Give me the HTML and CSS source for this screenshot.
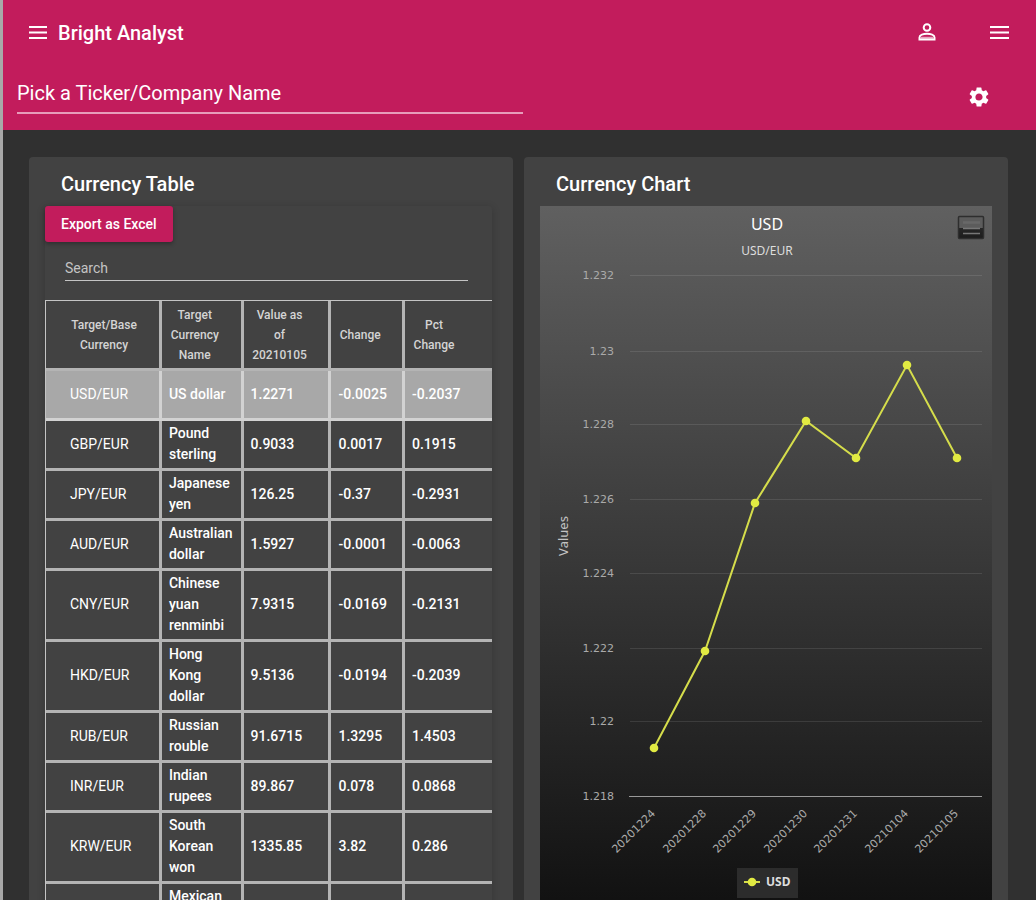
FILE: index.html
```html
<!DOCTYPE html>
<html lang="en">
<head>
<meta charset="utf-8">
<title>Bright Analyst</title>
<link rel="stylesheet" href="styles.css">
</head>
<body>
<div class="app">
  <header class="header">
    <div class="topbar">
      <button class="icon-button" type="button" aria-label="Menu">
        <svg width="20" height="20" viewBox="0 0 20 20"><path d="M1 4h18M1 9.500h18M1 15h18" stroke="currentColor" stroke-width="2"/></svg>
      </button>
      <h1 class="brand">Bright Analyst</h1>
      <nav class="actions">
        <button class="icon-button" type="button" aria-label="Account">
          <svg width="20" height="20" viewBox="0 0 20 20" fill="none" stroke="currentColor" stroke-width="2"><circle cx="10" cy="4.500" r="3.300"/><path d="M2.500 16.500v-2C2.500 12 6.500 10.800 10 10.800s7.500 1.200 7.500 3.700v2z"/><path d="M4 14.800h12" opacity=".6"/></svg>
        </button>
        <button class="icon-button" type="button" aria-label="More">
          <svg width="20" height="20" viewBox="0 0 20 20"><path d="M1 4h19M1 9.500h19M1 15h19" stroke="currentColor" stroke-width="2"/></svg>
        </button>
      </nav>
    </div>
    <div class="picker">
      <input class="ticker" type="text" aria-label="Pick a Ticker/Company Name" placeholder="Pick a Ticker/Company Name">
      <button class="icon-button settings" type="button" aria-label="Settings">
        <svg width="24" height="24" viewBox="0 0 24 24" fill="currentColor"><path d="M19.140 12.940c.04-.3.060-.61.060-.94s-.02-.64-.07-.94l2.030-1.580a.49.49 0 0 0 .12-.61l-1.920-3.320a.488.488 0 0 0-.59-.22l-2.390.96c-.5-.38-1.030-.7-1.620-.94l-.36-2.540a.484.484 0 0 0-.48-.41h-3.840c-.24 0-.43.17-.47.41l-.36 2.540c-.59.24-1.130.57-1.620.94l-2.390-.96c-.22-.08-.47 0-.59.22L2.740 8.870c-.12.21-.08.47.12.61l2.030 1.580c-.05.3-.09.63-.09.94s.02.64.07.94l-2.030 1.580a.49.49 0 0 0-.12.61l1.920 3.320c.12.22.37.29.59.22l2.390-.96c.5.38 1.030.7 1.620.94l.36 2.540c.05.24.24.41.48.41h3.840c.24 0 .44-.17.47-.41l.36-2.540c.59-.24 1.130-.56 1.620-.94l2.390.96c.22.080.47 0 .59-.22l1.920-3.320c.12-.22.07-.47-.12-.61zM12 15.600A3.610 3.610 0 0 1 8.400 12c0-1.980 1.620-3.600 3.600-3.600s3.600 1.620 3.600 3.600-1.620 3.600-3.600 3.600z"/></svg>
      </button>
    </div>
  </header>

  <main class="panels">
    <section class="card">
      <h2 class="card-title">Currency Table</h2>
      <div class="sheet">
        <button class="export" type="button">Export as Excel</button>
        <input class="search" type="search" aria-label="Search" placeholder="Search">
        <table class="rates">
          <colgroup><col class="col-pair"><col class="col-name"><col class="col-value"><col class="col-change"><col class="col-pct"></colgroup>
          <thead>
            <tr><th>Target/Base<br>Currency</th><th>Target<br>Currency<br>Name</th><th>Value as<br>of<br>20210105</th><th>Change</th><th>Pct<br>Change</th></tr>
          </thead>
          <tbody>
            <tr class="selected"><td>USD/EUR</td><td>US dollar</td><td>1.2271</td><td>-0.0025</td><td>-0.2037</td></tr>
            <tr><td>GBP/EUR</td><td>Pound sterling</td><td>0.9033</td><td>0.0017</td><td>0.1915</td></tr>
            <tr><td>JPY/EUR</td><td>Japanese yen</td><td>126.25</td><td>-0.37</td><td>-0.2931</td></tr>
            <tr><td>AUD/EUR</td><td>Australian dollar</td><td>1.5927</td><td>-0.0001</td><td>-0.0063</td></tr>
            <tr><td>CNY/EUR</td><td>Chinese yuan<br>renminbi</td><td>7.9315</td><td>-0.0169</td><td>-0.2131</td></tr>
            <tr><td>HKD/EUR</td><td>Hong<br>Kong<br>dollar</td><td>9.5136</td><td>-0.0194</td><td>-0.2039</td></tr>
            <tr><td>RUB/EUR</td><td>Russian rouble</td><td>91.6715</td><td>1.3295</td><td>1.4503</td></tr>
            <tr><td>INR/EUR</td><td>Indian<br>rupees</td><td>89.867</td><td>0.078</td><td>0.0868</td></tr>
            <tr><td>KRW/EUR</td><td>South Korean won</td><td>1335.85</td><td>3.82</td><td>0.286</td></tr>
            <tr><td></td><td>Mexican</td><td></td><td></td><td></td></tr>
          </tbody>
        </table>
      </div>
    </section>

    <section class="card">
      <h2 class="card-title">Currency Chart</h2>
      <div class="chart">
        <svg class="plot" viewBox="0 0 452 710" role="img" aria-label="USD/EUR values">
          <defs>
            <linearGradient id="menu-fill" x1="0" y1="0" x2="0" y2="1"><stop offset="0" stop-color="#5c5c5c"/><stop offset=".52" stop-color="#5c5c5c"/><stop offset=".54" stop-color="#262626"/><stop offset="1" stop-color="#1c1c1c"/></linearGradient>
          </defs>
          <g class="chart-heading">
            <text class="title" x="227" y="24">USD</text>
            <text class="subtitle" x="227" y="49">USD/EUR</text>
          </g>
          <g class="menu">
            <rect x="418.500" y="10.500" width="25" height="22" rx="1" fill="url(#menu-fill)" stroke="#2e2e2e" stroke-width="1.500"/>
            <path d="M423 16.500h17M423 22.500h17M423 27.500h17" stroke="#777" stroke-width="1.500"/>
            <path d="M423 16.500h17" stroke="#686868" stroke-width="2"/>
          </g>
          <path class="grid" d="M90 69.500h352M90 145.500h352M90 218.500h352M90 293.500h352M90 367.500h352M90 442.500h352M90 515.500h352"/>
          <path class="axis" d="M89 590.500h353"/>
          <g class="y-labels">
            <text x="74" y="73">1.232</text><text x="74" y="149">1.23</text><text x="74" y="222">1.228</text><text x="74" y="297">1.226</text><text x="74" y="371">1.224</text><text x="74" y="446">1.222</text><text x="74" y="519">1.22</text><text x="74" y="594">1.218</text>
          </g>
          <text class="y-title" transform="translate(28 330) rotate(-90)">Values</text>
          <g class="x-labels">
            <text transform="translate(116 608) rotate(-45)">20201224</text>
            <text transform="translate(167 608) rotate(-45)">20201228</text>
            <text transform="translate(217 608) rotate(-45)">20201229</text>
            <text transform="translate(268 608) rotate(-45)">20201230</text>
            <text transform="translate(318 608) rotate(-45)">20201231</text>
            <text transform="translate(369 608) rotate(-45)">20210104</text>
            <text transform="translate(419 608) rotate(-45)">20210105</text>
          </g>
          <polyline class="series" points="114,542 165,445 215,297 266,215 316,252 367,159 417,252"/>
          <g class="dots"><circle cx="114" cy="542" r="4.300"/><circle cx="165" cy="445" r="4.300"/><circle cx="215" cy="297" r="4.300"/><circle cx="266" cy="215" r="4.300"/><circle cx="316" cy="252" r="4.300"/><circle cx="367" cy="159" r="4.300"/><circle cx="417" cy="252" r="4.300"/></g>
          <rect x="197" y="662" width="61" height="30" fill="#2c2c2c"/>
          <path class="series" d="M204 676h16"/>
          <g class="dots"><circle cx="212" cy="676" r="4.300"/></g>
          <text class="legend" x="226" y="680">USD</text>
        </svg>
      </div>
    </section>
  </main>
</div>
</body>
</html>
```

FILE: styles.css
```css
* { box-sizing: border-box; }

body {
  margin: 0;
  background: #303030;
  color: #fff;
  font-family: Roboto, "Liberation Sans", sans-serif;
}

.app {
  height: 100vh;
  overflow: hidden;
  border-left: 3px solid #a8a8a8;
}

.header {
  height: 130px;
  background: #c21c5c;
}

.topbar {
  display: flex;
  align-items: center;
  gap: 10px;
  height: 66px;
  padding: 0 27px 0 25px;
}

.brand {
  margin: 0;
  font-size: 20px;
  font-weight: 500;
  line-height: 24px;
}

.actions {
  display: flex;
  gap: 52px;
  margin-left: auto;
}

.icon-button {
  display: flex;
  padding: 0;
  border: 0;
  background: none;
  color: #fff;
}

.picker {
  display: flex;
  justify-content: space-between;
  align-items: flex-start;
  padding: 8px 45px 0 14px;
}

.settings { margin-top: 11px; }

.ticker {
  width: 52%;
  max-width: 506px;
  height: 40px;
  padding: 0;
  border: 0;
  border-bottom: 2px solid #e79cba;
  outline: 0;
  background: none;
  color: #fff;
  font: 400 20px/24px Roboto, sans-serif;
}

.ticker::placeholder {
  color: #fff;
  opacity: 1;
}

.panels {
  display: grid;
  grid-template-columns: 1fr 1fr;
  gap: 11px;
  padding: 27px 28px 28px 26px;
}

.card {
  min-width: 0;
  padding: 15px 16px 16px;
  border-radius: 4px;
  background: #424242;
}

.card-title {
  margin: 0 0 10px;
  padding-left: 16px;
  font-size: 20px;
  font-weight: 500;
  line-height: 24px;
}

.sheet {
  margin-right: 5px;
  border-radius: 4px;
  box-shadow: 0 2px 8px rgba(0, 0, 0, .2);
}

.export {
  display: block;
  height: 36px;
  padding: 0 16px;
  border: 0;
  border-radius: 3px;
  background: #c21c5c;
  box-shadow: 0 2px 4px rgba(0, 0, 0, .3);
  color: #fff;
  font: 500 14px/34px Roboto, sans-serif;
}

.search {
  display: block;
  width: calc(100% - 44px);
  height: 26px;
  margin: 13px 24px 19px 20px;
  padding: 0;
  border: 0;
  border-bottom: 1px solid #c4c4c4;
  outline: 0;
  background: none;
  color: #fff;
  font: 400 14px/24px Roboto, sans-serif;
}

.search::placeholder {
  color: #c4c4c4;
  opacity: 1;
}

.rates {
  width: 100%;
  table-layout: fixed;
  border-collapse: separate;
  border-spacing: 0;
  border-top: 1px solid #c4c4c4;
  border-left: 1px solid #c4c4c4;
}

.col-pair { width: 26%; }
.col-name { width: 18.3%; }
.col-value { width: 19.7%; }
.col-change { width: 16.5%; }
.col-pct { width: 19.5%; }

.rates th,
.rates td {
  border-right: 3px solid #b4b4b4;
  border-bottom: 3px solid #b4b4b4;
}

.rates th:last-child,
.rates td:last-child {
  border-right: 0;
}

.rates th {
  height: 70px;
  padding: 4px 20px 3px 7px;
  color: #d4d4d4;
  font-size: 12px;
  font-weight: 500;
  line-height: 20px;
  white-space: nowrap;
}

.rates th:first-child { padding: 4px 20px 3px 23px; }
.rates th:last-child { padding-right: 36px; }

.rates td {
  height: 50px;
  padding: 2px 2px 3px 7px;
  font-size: 14px;
  font-weight: 500;
  line-height: 21px;
}

.rates td:first-child {
  padding-left: 24px;
  font-weight: 400;
}

.rates tr:last-child td { vertical-align: top; }

.rates .selected { background: #a8a8a8; }

.rates .selected td { border-color: #d2d2d2; }

.chart {
  background: linear-gradient(#606060, #101010);
}

.plot {
  display: block;
  width: 100%;
}

.plot text { font-family: "Noto Sans", sans-serif; }

.chart-heading { text-anchor: middle; }
.plot .title { fill: #fff; font-size: 16px; }
.plot .subtitle { fill: #ddd; font-size: 12px; }

.grid {
  stroke: #fff;
  stroke-opacity: .1;
}

.axis {
  stroke: #999;
}

.y-labels,
.x-labels {
  fill: #aaa;
  font-size: 11px;
  text-anchor: end;
}

.plot .y-labels text,
.plot .x-labels text { font-family: "DejaVu Sans", sans-serif; }

.y-title {
  fill: #c4c4c4;
  font-size: 13px;
  text-anchor: middle;
}

.series {
  fill: none;
  stroke: #d5dd4b;
  stroke-width: 2;
}

.dots { fill: #e1ea42; }

.legend {
  fill: #ddd;
  font-size: 12px;
  font-weight: 700;
}
```
